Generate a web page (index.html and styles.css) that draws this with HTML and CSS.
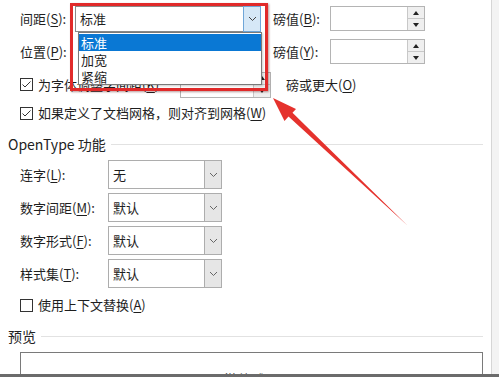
FILE: index.html
```html
<!DOCTYPE html>
<html lang="zh-CN">

<head>
    <meta charset="UTF-8" />
    <meta name="viewport" content="width=device-width, initial-scale=1.0" />
    <title>字体 - 高级</title>
    <link rel="stylesheet" href="styles.css">
</head>

<body>
    <div class="page">
        <div class="dialog">
            <div class="form">
                <!-- Spacing / position -->
                <div class="row">
                    <span class="lbl">间距(<u>S</u>):</span>
                    <div class="combo spacing">
                        <span class="value">标准</span>
                        <span class="drop focus"><svg width="9" height="6" viewBox="0 0 9 6"><path d="M1 1 L4.5 4.5 L8 1" fill="none" stroke="#444" stroke-width="1"/></svg></span>
                    </div>
                    <span class="lbl pt">磅值(<u>B</u>):</span>
                    <div class="spin">
                        <span class="field"></span>
                        <span class="arrows">
                            <span class="up"></span>
                            <span class="down"></span>
                        </span>
                    </div>
                </div>

                <div class="row">
                    <span class="lbl">位置(<u>P</u>):</span>
                    <div class="blank"></div>
                    <span class="lbl pt">磅值(<u>Y</u>):</span>
                    <div class="spin">
                        <span class="field"></span>
                        <span class="arrows">
                            <span class="up"></span>
                            <span class="down"></span>
                        </span>
                    </div>
                </div>

                <div class="row">
                    <span class="check"><svg width="13" height="13" viewBox="0 0 13 13"><rect x="0.5" y="0.5" width="12" height="12" fill="#fff" stroke="#333"/><path d="M2.5 6.5 L5 9 L10.5 3.5" fill="none" stroke="#333" stroke-width="1"/></svg></span>
                    <span class="ctext kern">为字体调整字间距(<u>K</u>):</span>
                    <div class="spin small">
                        <span class="field"></span>
                        <span class="arrows">
                            <span class="up"></span>
                            <span class="down"></span>
                        </span>
                    </div>
                    <span class="after">磅或更大(<u>O</u>)</span>
                </div>

                <div class="row short">
                    <span class="check"><svg width="13" height="13" viewBox="0 0 13 13"><rect x="0.5" y="0.5" width="12" height="12" fill="#fff" stroke="#333"/><path d="M2.5 6.5 L5 9 L10.5 3.5" fill="none" stroke="#333" stroke-width="1"/></svg></span>
                    <span class="ctext">如果定义了文档网格，则对齐到网格(<u>W</u>)</span>
                </div>
            </div>

            <!-- OpenType -->
            <div class="section ot">
                <span>OpenType 功能</span>
                <span class="rule"></span>
            </div>

            <div class="form">
                <div class="row">
                    <span class="lbl wide">连字(<u>L</u>):</span>
                    <div class="combo">
                        <span class="value">无</span>
                        <span class="drop"><svg width="9" height="6" viewBox="0 0 9 6"><path d="M1 1 L4.5 4.5 L8 1" fill="none" stroke="#666" stroke-width="1"/></svg></span>
                    </div>
                </div>
                <div class="row">
                    <span class="lbl wide">数字间距(<u>M</u>):</span>
                    <div class="combo">
                        <span class="value">默认</span>
                        <span class="drop"><svg width="9" height="6" viewBox="0 0 9 6"><path d="M1 1 L4.5 4.5 L8 1" fill="none" stroke="#666" stroke-width="1"/></svg></span>
                    </div>
                </div>
                <div class="row">
                    <span class="lbl wide">数字形式(<u>F</u>):</span>
                    <div class="combo">
                        <span class="value">默认</span>
                        <span class="drop"><svg width="9" height="6" viewBox="0 0 9 6"><path d="M1 1 L4.5 4.5 L8 1" fill="none" stroke="#666" stroke-width="1"/></svg></span>
                    </div>
                </div>
                <div class="row">
                    <span class="lbl wide">样式集(<u>T</u>):</span>
                    <div class="combo">
                        <span class="value">默认</span>
                        <span class="drop"><svg width="9" height="6" viewBox="0 0 9 6"><path d="M1 1 L4.5 4.5 L8 1" fill="none" stroke="#666" stroke-width="1"/></svg></span>
                    </div>
                </div>
                <div class="row ctx">
                    <span class="check"><svg width="13" height="13" viewBox="0 0 13 13"><rect x="0.5" y="0.5" width="12" height="12" fill="#fff" stroke="#333"/></svg></span>
                    <span class="ctext">使用上下文替换(<u>A</u>)</span>
                </div>
            </div>

            <!-- Preview -->
            <div class="section pv">
                <span>预览</span>
                <span class="rule"></span>
            </div>
            <div class="preview">
                <span>微软雅黑</span>
            </div>

            <!-- open dropdown list + annotation -->
            <div class="list">
                <div class="item sel">标准</div>
                <div class="item">加宽</div>
                <div class="item">紧缩</div>
            </div>
            <div class="mark"></div>
            <svg class="arrow" width="491" height="374" viewBox="0 0 491 374">
                <polygon points="273,98 296,109 292.5,112.8 408,226 288.5,116.5 284.5,121" fill="#e5322d"/>
            </svg>
        </div>
        <div class="edge"></div>
    </div>
</body>

</html>
```

FILE: styles.css
```css
* {
    margin: 0;
    padding: 0;
    box-sizing: border-box;
}

body {
    width: 499px;
    height: 377px;
    overflow: hidden;
    background-color: #fff;
}

u {
    text-decoration: underline;
    text-underline-offset: 2px;
}

.page {
    display: flex;
    height: 377px;
    border-bottom: 3px solid #6b6b6b;
}

.dialog {
    position: relative;
    width: 492px;
    height: 374px;
    border-right: 1px solid #d6d6d6;
    background-color: #fff;
    font-family: "Noto Sans CJK SC", "Noto Sans", sans-serif;
    font-size: 13px;
    color: #1e1e1e;
    overflow: hidden;
}

.edge {
    flex: 1;
    background-color: #f3f3f3;
}

.form {
    padding-left: 20px;
    padding-top: 2px;
}

.row {
    display: flex;
    align-items: center;
    height: 33px;
    line-height: 16px;
}

.row.short {
    height: 24px;
}

.row.ctx {
    height: 28px;
    margin-top: 1px;
}

.lbl {
    width: 55px;
    flex-shrink: 0;
}

.lbl.pt {
    width: 57px;
    margin-left: 12px;
}

.lbl.wide {
    width: 88px;
}

/* combo boxes */
.combo {
    display: flex;
    width: 114px;
    height: 29px;
    border: 1px solid #adadad;
    background-color: #fff;
}

.combo.spacing {
    width: 186px;
    height: 26px;
    border-color: #8a8a8a;
}

.combo .value {
    flex: 1;
    padding-left: 4px;
    display: flex;
    align-items: center;
}

.drop {
    width: 17px;
    display: flex;
    align-items: center;
    justify-content: center;
    background-color: #e6e6e6;
    border-left: 1px solid #adadad;
}

.drop.focus {
    background-color: #d6e8f7;
    border: 1px solid #6fa6d8;
    margin: -1px -1px -1px 0;
    width: 18px;
}

.blank {
    width: 186px;
    height: 26px;
}

/* spin boxes */
.spin {
    display: flex;
    width: 95px;
    height: 25px;
    border: 1px solid #b4b4b4;
}

.spin .field {
    flex: 1;
}

.spin .arrows {
    width: 17px;
    display: flex;
    flex-direction: column;
    border-left: 1px solid #c8c8c8;
}

.spin .up,
.spin .down {
    flex: 1;
    display: flex;
    align-items: center;
    justify-content: center;
    background-color: #efefef;
}

.spin .up {
    border-bottom: 1px solid #c8c8c8;
}

.spin .up::after {
    content: "";
    border-left: 3.5px solid transparent;
    border-right: 3.5px solid transparent;
    border-bottom: 4px solid #222;
}

.spin .down::after {
    content: "";
    border-left: 3.5px solid transparent;
    border-right: 3.5px solid transparent;
    border-top: 4px solid #222;
}

.spin.small {
    width: 91px;
    height: 26px;
    margin-left: 16px;
}

.check {
    width: 13px;
    height: 13px;
    display: flex;
    margin-right: 5px;
}

.ctext.kern {
    width: 126px;
}

.after {
    margin-left: 15px;
}

/* section headings */
.section {
    display: flex;
    align-items: center;
    gap: 5px;
    height: 24px;
    padding: 0 8px;
    font-size: 14px;
    color: #222;
}

.section.ot {
    margin-top: 7px;
}

.section.pv {
    margin-top: 5px;
}

.section .rule {
    flex: 1;
    height: 1px;
    background-color: #e2e2e2;
}

.preview {
    margin: 4px 0 0 20px;
    width: 463px;
    height: 40px;
    border: 1px solid #7a7a7a;
    text-align: center;
    padding-top: 16px;
    font-size: 14px;
    color: #333;
}

/* open list */
.list {
    position: absolute;
    left: 78px;
    top: 32px;
    width: 184px;
    height: 53px;
    border: 1px solid #7a7a7a;
    background-color: #fff;
    box-shadow: 1px 1px 2px rgba(0, 0, 0, 0.2);
    padding-top: 1px;
}

.item {
    height: 17px;
    line-height: 17px;
    padding-left: 2px;
    font-size: 13px;
}

.item.sel {
    background-color: #0a78d4;
    color: #fff;
}

.mark {
    position: absolute;
    left: 70px;
    top: 3px;
    width: 198px;
    height: 88px;
    border: 3px solid #e12a2a;
    box-shadow: 1px 1px 2px rgba(80, 0, 0, 0.4);
}

.arrow {
    position: absolute;
    left: 0;
    top: 0;
}
```
